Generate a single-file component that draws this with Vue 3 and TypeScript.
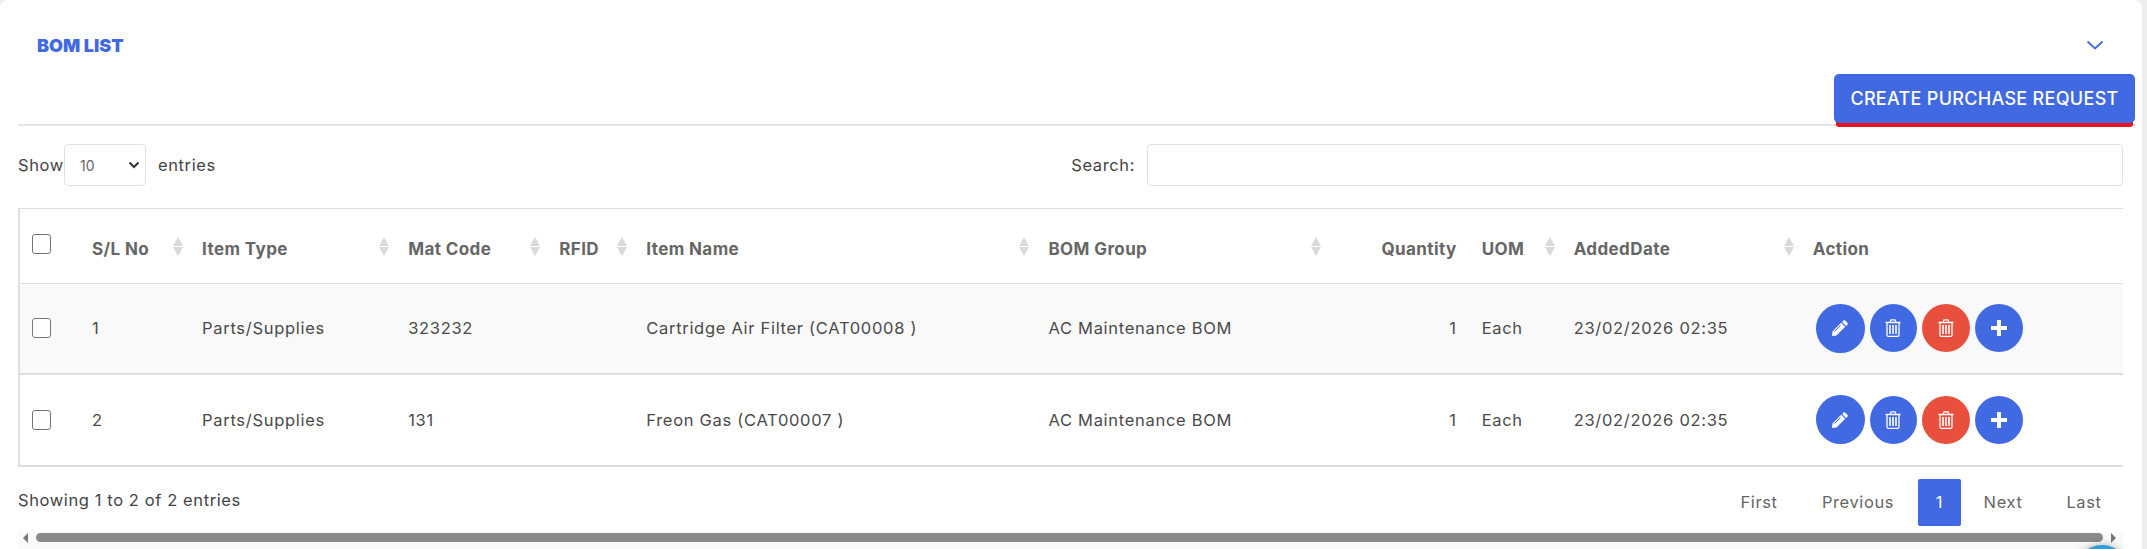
<script setup lang="ts">
interface Row { no: number; type: string; code: string; name: string; group: string; qty: number; uom: string; date: string }
const rows: Row[] = [
  { no: 1, type: 'Parts/Supplies', code: '323232', name: 'Cartridge Air Filter (CAT00008 )', group: 'AC Maintenance BOM', qty: 1, uom: 'Each', date: '23/02/2026 02:35' },
  { no: 2, type: 'Parts/Supplies', code: '131', name: 'Freon Gas (CAT00007 )', group: 'AC Maintenance BOM', qty: 1, uom: 'Each', date: '23/02/2026 02:35' },
]
const cols = [61, 110, 206, 151, 87, 402, 291, 142, 92, 239, 322]
</script>

<template>
  <div class="page">
    <section class="card">
      <header class="head">
        <h2 class="title">BOM LIST</h2>
        <svg class="chev" width="18" height="10" viewBox="0 0 18 10" fill="none"><path d="M1.500 1.500 9 8.500l7.500-7" stroke="#4169e1" stroke-width="1.800"/></svg>
      </header>
      <div class="toolbar"><button class="create">CREATE PURCHASE REQUEST</button></div>
      <div class="filters">
        <div class="len">
          <span class="show">Show</span>
          <div class="sel"><span>10</span>
            <svg width="12" height="8" viewBox="0 0 12 8" fill="none"><path d="M1.500 1.500 6 6l4.500-4.500" stroke="#333" stroke-width="2"/></svg>
          </div>
          <span class="ent">entries</span>
        </div>
        <div class="search"><span>Search:</span><div class="inp"></div></div>
      </div>
      <table class="tbl">
        <colgroup><col v-for="(c, i) in cols" :key="i" :style="{ width: c + 'px' }" /></colgroup>
        <thead>
          <tr>
            <th><span class="cb"></span></th>
            <th v-for="h in ['S/L No','Item Type','Mat Code','RFID','Item Name','BOM Group']" :key="h" class="sort">{{ h }}<i class="arrows"></i></th>
            <th class="right">Quantity</th>
            <th class="sort">UOM<i class="arrows"></i></th>
            <th class="sort">AddedDate<i class="arrows"></i></th>
            <th>Action</th>
          </tr>
        </thead>
        <tbody>
          <tr v-for="r in rows" :key="r.no">
            <td><span class="cb"></span></td>
            <td>{{ r.no }}</td><td>{{ r.type }}</td><td>{{ r.code }}</td><td></td>
            <td>{{ r.name }}</td><td>{{ r.group }}</td><td class="right">{{ r.qty }}</td>
            <td>{{ r.uom }}</td><td>{{ r.date }}</td>
            <td>
              <div class="acts">
                <span class="act big"><svg width="18" height="18" viewBox="0 0 18 18"><path fill="#fff" d="M12.600 1.400a1 1 0 0 1 1.400 0l2.600 2.600a1 1 0 0 1 0 1.400l-1.500 1.500-4-4zM10.200 3.800l4 4-8.700 8.700-4.500.5.500-4.500z"/><path d="M9.500 6.500 3.500 12.500" stroke="#4169e1" stroke-width="1"/></svg></span>
                <span class="act narrow"><svg width="16" height="18" viewBox="0 0 16 18" fill="none" stroke="#fff" stroke-width="1.300"><path d="M.5 3.500h15M2 3.500V16a1.300 1.300 0 0 0 1.300 1.300h9.400A1.300 1.300 0 0 0 14 16V3.500M5 3.500l1-2.700h4l1 2.700"/><path d="M5 6v9M8 6v9M11 6v9" stroke-width="1.600"/></svg></span>
                <span class="act red"><svg width="16" height="18" viewBox="0 0 16 18" fill="none" stroke="#fff" stroke-width="1.300"><path d="M.5 3.500h15M2 3.500V16a1.300 1.300 0 0 0 1.300 1.300h9.400A1.300 1.300 0 0 0 14 16V3.500M5 3.500l1-2.700h4l1 2.700"/><path d="M5 6v9M8 6v9M11 6v9" stroke-width="1.600"/></svg></span>
                <span class="act"><svg width="16" height="16" viewBox="0 0 16 16" fill="#fff"><path d="M6 0h4v6h6v4h-6v6H6v-6H0V6h6z"/></svg></span>
              </div>
            </td>
          </tr>
        </tbody>
      </table>
      <div class="foot">
        <span class="info">Showing 1 to 2 of 2 entries</span>
        <nav class="pager">
          <a class="first">First</a><a class="prev">Previous</a><a class="cur">1</a><a class="next">Next</a><a class="last">Last</a>
        </nav>
      </div>
      <div class="scroll">
        <i class="tri l"></i><div class="thumb"></div><i class="tri r"></i>
      </div>
    </section>
    <div class="fab"></div>
  </div>
</template>

<style>
html, body { margin: 0; background: #fff; overflow: hidden; }
</style>

<style scoped>
.page { width: 2147px; height: 549px; position: relative; overflow: hidden; background: #eee; font-family: Inter, "Open Sans", sans-serif; color: #555; }
.card { width: 2142px; height: 549px; box-sizing: border-box; background: #fff; border-radius: 8px 8px 0 0; padding: 0 7px 0 18px; }
.head { height: 74px; display: flex; align-items: flex-start; justify-content: space-between; padding: 37px 31px 0 19px; box-sizing: border-box; }
.title { margin: 0; font-size: 18px; line-height: 18px; font-weight: 900; letter-spacing: 0; color: #4169e1; }
.chev { margin-top: 3px; }
.toolbar { height: 50px; display: flex; justify-content: flex-end; border-bottom: 2px solid #e4e4e4; box-sizing: content-box; }
.create { width: 301px; height: 49px; border: 0; border-radius: 5px; background: #4169e1; color: #fff; font: 500 18px Inter, sans-serif; letter-spacing: .3px; padding: 0; box-shadow: 0 6px 0 -2px #e3141c; white-space: nowrap; }
.filters { display: flex; justify-content: space-between; margin: 18px 12px 0 0; height: 42px; align-items: center; font-size: 16.500px; letter-spacing: .6px; color: #444; }
.len, .search { display: flex; align-items: center; }
.show { width: 46px; white-space: nowrap; }
.sel { width: 82px; height: 42px; box-sizing: border-box; border: 1px solid #e2e2e2; border-radius: 4px; display: flex; align-items: center; justify-content: space-between; padding: 0 5px 0 15px; font-size: 14px; letter-spacing: 0; color: #666; }
.ent { margin-left: 12px; }
.search span { margin-right: 12px; }
.inp { width: 976px; height: 42px; box-sizing: border-box; border: 1px solid #e2e2e2; border-radius: 4px; }
.tbl { margin-top: 22px; width: 2105px; table-layout: fixed; border-collapse: collapse; border-left: 2px solid #e0e0e0; border-top: 1px solid #e0e0e0; }
th { position: relative; height: 75px; padding: 6px 0 0 12px; box-sizing: border-box; text-align: left; font-size: 17px; font-weight: 700; letter-spacing: .4px; color: #666; border-bottom: 1px solid #ddd; white-space: nowrap; }
td { height: 92px; padding: 0 0 0 12px; box-sizing: border-box; font-size: 16.500px; letter-spacing: .7px; color: #4a4a4a; border-bottom: 2px solid #ddd; white-space: nowrap; }
tbody tr:nth-child(1) td { height: 90px; }
th.right, td.right { text-align: right; padding: 0 13px 0 0; }
th.right { padding-top: 6px; }
tbody tr:nth-child(1) { background: #f9f9f9; }
.cb { display: block; width: 19px; height: 20px; box-sizing: border-box; border: 1.500px solid #767676; border-radius: 3px; background: #fff; }
th .cb { margin-top: -10px; }
.arrows { position: absolute; right: 7px; top: 28px; width: 10px; height: 19px; }
.arrows::before, .arrows::after { content: ""; position: absolute; left: 0; border-left: 5px solid transparent; border-right: 5px solid transparent; }
.arrows::before { top: 0; border-bottom: 9px solid #d9d9d9; }
.arrows::after { bottom: 0; border-top: 9px solid #d9d9d9; }
.acts { display: flex; align-items: center; gap: 5px; margin-left: 3px; }
.act { width: 48px; height: 48px; border-radius: 50%; background: #4169e1; display: flex; align-items: center; justify-content: center; flex: none; }
.act.big { width: 49px; height: 49px; }
.act.narrow { width: 47px; }
.act.red { background: #e94f3d; }
.foot { height: 59px; display: flex; justify-content: space-between; align-items: center; margin-top: 6px; padding-right: 12px; }
.info { font-size: 16.500px; letter-spacing: .6px; color: #444; margin-top: -4px; }
.pager { display: flex; align-items: stretch; font-size: 16.500px; letter-spacing: .6px; color: #666; height: 47px; }
.pager a { display: flex; align-items: center; justify-content: center; }
.first, .last { width: 78px; } .prev { width: 120px; } .next { width: 84px; }
.pager a.cur { width: 43px; background: #4169e1; color: #fff; border-radius: 2px; }
.scroll { height: 18px; width: 2105px; background: #fafafa; display: flex; align-items: center; gap: 6px; padding: 0 0 6px 5px; box-sizing: border-box; }
.thumb { width: 2067px; height: 9px; border-radius: 5px; background: #8a8a8a; }
.tri { width: 0; height: 0; border-top: 5px solid transparent; border-bottom: 5px solid transparent; }
.tri.l { border-right: 5px solid #777; margin-right: 2px; }
.tri.r { border-left: 5px solid #777; margin-left: 2px; }
.fab { position: absolute; left: 2075px; top: 545px; width: 54px; height: 54px; border-radius: 50%; background: #2e9fdc; box-shadow: 0 0 8px rgba(0,0,0,.3); }
</style>
